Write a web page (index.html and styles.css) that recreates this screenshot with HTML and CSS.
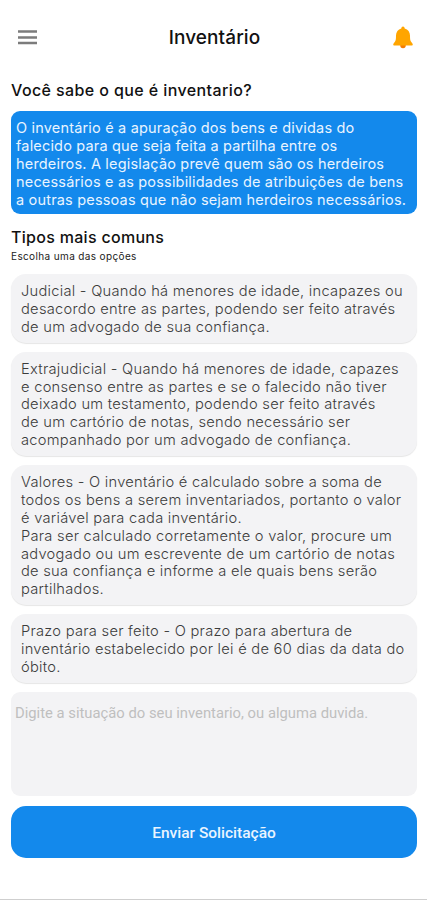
FILE: index.html
```html
<!DOCTYPE html>
<html lang="pt-BR">

<head>
    <meta charset="UTF-8">
    <meta name="viewport" content="width=device-width, initial-scale=1.0">
    <title>Inventário</title>
    <link rel="stylesheet" href="styles.css">
</head>

<body>
    <div class="screen">
        <header class="header">
            <button class="icon-btn" aria-label="Menu">
                <svg width="19" height="15" viewBox="0 0 19 15">
                    <path d="M0 1.500h19M0 7.500h19M0 13h19" stroke="#7c7c7c" stroke-width="2.500" />
                </svg>
            </button>
            <h1>Inventário</h1>
            <button class="icon-btn" aria-label="Notificações">
                <svg width="20" height="23" viewBox="0 0 20 23">
                    <path d="M7.200 19h5.600a2.800 3.300 0 0 1-5.600 0z" fill="#f57c00" />
                    <path d="M10 .5c-1 0-1.600.8-1.700 1.900C5 3.400 3 6 3 9.500c0 3.800-.2 5.300-1.300 6.500L.6 17.500c-.7.900-.3 2 .7 2h17.400c1 0 1.400-1.100.7-2L18.300 16C17.200 14.800 17 13.300 17 9.500c0-3.500-2-6.100-5.300-7.100C11.600 1.300 11 .5 10 .5z" fill="#ffa500" />
                </svg>
            </button>
        </header>

        <main class="content">
            <h2>Você sabe o que é inventario?</h2>
            <p class="info">O inventário é a apuração dos bens e dividas do<br>
                falecido para que seja feita a partilha entre os<br>
                herdeiros. A legislação prevê quem são os herdeiros<br>
                necessários e as possibilidades de atribuições de bens<br>
                a outras pessoas que não sejam herdeiros necessários.</p>

            <h2 class="types-title">Tipos mais comuns</h2>
            <p class="subtitle">Escolha uma das opções</p>

            <div class="options">
                <div class="card">Judicial - Quando há menores de idade, incapazes ou<br>
                    desacordo entre as partes, podendo ser feito através<br>
                    de um advogado de sua confiança.</div>
                <div class="card">Extrajudicial - Quando há menores de idade, capazes<br>
                    e consenso entre as partes e se o falecido não tiver<br>
                    deixado um testamento, podendo ser feito através<br>
                    de um cartório de notas, sendo necessário ser<br>
                    acompanhado por um advogado de confiança.</div>
                <div class="card">Valores - O inventário é calculado sobre a soma de<br>
                    todos os bens a serem inventariados, portanto o valor<br>
                    é variável para cada inventário.<br>
                    Para ser calculado corretamente o valor, procure um<br>
                    advogado ou um escrevente de um cartório de notas<br>
                    de sua confiança e informe a ele quais bens serão<br>
                    partilhados.</div>
                <div class="card">Prazo para ser feito - O prazo para abertura de<br>
                    inventário estabelecido por lei é de 60 dias da data do<br>
                    óbito.</div>
            </div>

            <textarea class="message" placeholder="Digite a situação do seu inventario, ou alguma duvida."></textarea>
            <button class="submit">Enviar Solicitação</button>
        </main>
    </div>
</body>

</html>
```
FILE: styles.css
```css
* {
    margin: 0;
    padding: 0;
    box-sizing: border-box;
}

body {
    background: #fff;
    color: #111;
    font-family: Inter, sans-serif;
}

.screen {
    height: 900px;
    border-bottom: 1px solid #cfcfcf;
    overflow: hidden;
}

.header {
    display: flex;
    justify-content: space-between;
    align-items: center;
    height: 75px;
    padding: 0 14px 0 18px;
}

.header h1 {
    padding-right: 1px;
    font-size: 19px;
    font-weight: 500;
    letter-spacing: 0.1px;
}

.icon-btn {
    display: flex;
    background: none;
    border: none;
    cursor: pointer;
}

.content {
    padding: 4px 10px 0 11px;
}

h2 {
    font-size: 16px;
    font-weight: 500;
    line-height: 22px;
    letter-spacing: 0.4px;
    white-space: nowrap;
}

.info {
    height: 103px;
    margin-top: 10px;
    padding: 8.400px 5px;
    background: #1389ec;
    border-radius: 9px;
    color: #e9f4ff;
    font-size: 14.500px;
    line-height: 17.800px;
    letter-spacing: 0.18px;
    white-space: nowrap;
}

.types-title {
    margin-top: 12px;
    letter-spacing: 0.3px;
}

.subtitle {
    color: #222;
    font-size: 10px;
    line-height: 16px;
    letter-spacing: 0.37px;
}

.options {
    display: flex;
    flex-direction: column;
    gap: 9px;
    margin-top: 10px;
}

.card {
    padding: 9px 10px 6.500px;
    background: #f3f3f5;
    border-radius: 15px;
    box-shadow: 0 1px 1px rgba(0, 0, 0, 0.1);
    color: #3c3c3c;
    font-size: 14.700px;
    font-weight: 300;
    line-height: 17.800px;
    letter-spacing: 0.26px;
    white-space: nowrap;
}

.message {
    display: block;
    width: 100%;
    height: 104px;
    margin-top: 9px;
    padding: 12px 4px;
    background: #f3f3f5;
    border: none;
    border-radius: 9px;
    outline: none;
    resize: none;
    font-family: Roboto, sans-serif;
    font-size: 14.800px;
    line-height: 18px;
}

.message::placeholder {
    color: #bfbfbf;
}

.submit {
    display: block;
    width: 100%;
    height: 52px;
    margin-top: 10px;
    padding-top: 2px;
    background: #1389ec;
    border: none;
    border-radius: 15px;
    color: #e9f4ff;
    font-family: Roboto, sans-serif;
    font-size: 15.500px;
    font-weight: 500;
    cursor: pointer;
}
```
